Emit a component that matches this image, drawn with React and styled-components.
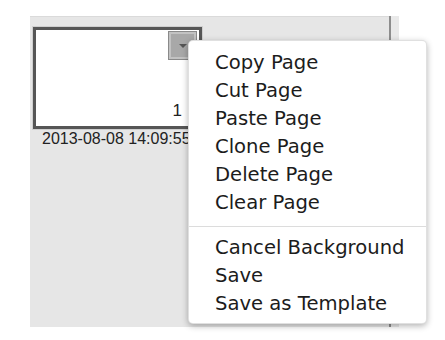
import React from "react";
import styled, { createGlobalStyle } from "styled-components";

const GlobalStyle = createGlobalStyle`
  body {
    margin: 0;
    background: #ffffff;
  }
`;

const Stage = styled.div`
  position: relative;
  width: 445px;
  height: 340px;
  padding: 16px 0 0 30px;
  box-sizing: border-box;
  overflow: hidden;
`;

const Panel = styled.div`
  display: flex;
  width: 369px;
  height: 311px;
  background: #e6e6e6;
`;

const ThumbList = styled.div`
  flex: 1;
  display: flex;
  flex-direction: column;
  padding: 9px 0 0 2px;
  border-top: 1px solid #dadada;
`;

const Divider = styled.div`
  width: 2px;
  background: #8d8d8d;
`;

const Strip = styled.div`
  width: 8px;
  background: #e9e9e9;
`;

const Thumb = styled.div`
  position: relative;
  width: 171px;
  height: 104px;
  box-sizing: border-box;
  border: 1px solid #cfcfcf;
`;

const ThumbInner = styled.div`
  height: 100%;
  box-sizing: border-box;
  border: 3px solid #565656;
  background: #ffffff;
  display: flex;
  flex-direction: column;
  align-items: flex-end;
  justify-content: flex-end;
  padding: 0 17px 6px 0;
`;

const PageNum = styled.span`
  font-family: "Liberation Sans", Arial, sans-serif;
  font-size: 17px;
  line-height: 18px;
  color: #222222;
`;

const DropButton = styled.div`
  position: absolute;
  top: 4px;
  right: 5px;
  width: 29px;
  height: 29px;
  box-sizing: border-box;
  border: 1px solid #8a8a8a;
  background: #a8a8a8;
  box-shadow: inset 0 0 0 2px #c2c2c2;
  display: flex;
  justify-content: center;
  padding-top: 12px;
`;

const Caret = styled.div`
  width: 0;
  height: 0;
  border-left: 4px solid transparent;
  border-right: 4px solid transparent;
  border-top: 4px solid #555555;
`;

const DateLabel = styled.div`
  font-family: "Liberation Sans", Arial, sans-serif;
  font-size: 16px;
  line-height: 18px;
  color: #222222;
  padding-left: 10px;
  white-space: nowrap;
`;

const Menu = styled.ul`
  position: absolute;
  left: 188px;
  top: 40px;
  width: 239px;
  height: 284px;
  box-sizing: border-box;
  margin: 0;
  padding: 8px 0 7px;
  list-style: none;
  background: #ffffff;
  border-radius: 5px;
  border: 1px solid rgba(0, 0, 0, 0.12);
  box-shadow: 0 2px 6px rgba(0, 0, 0, 0.3);
  z-index: 2;
`;

const Item = styled.li`
  font-family: "DejaVu Sans", "Lucida Grande", sans-serif;
  font-size: 19.6px;
  line-height: 28px;
  color: #1c1c1c;
  padding-left: 26px;
  white-space: nowrap;
`;

const Separator = styled.li`
  height: 1px;
  margin: 9px 0 7px;
  background: #dcdcdc;
`;

const firstGroup = [
  "Copy Page",
  "Cut Page",
  "Paste Page",
  "Clone Page",
  "Delete Page",
  "Clear Page",
];
const secondGroup = ["Cancel Background", "Save", "Save as Template"];

export default function App() {
  return (
    <>
      <GlobalStyle />
      <Stage>
        <Panel>
          <ThumbList>
            <Thumb>
              <ThumbInner>
                <PageNum>1</PageNum>
              </ThumbInner>
              <DropButton>
                <Caret />
              </DropButton>
            </Thumb>
            <DateLabel>2013-08-08 14:09:55</DateLabel>
          </ThumbList>
          <Divider />
          <Strip />
        </Panel>
        <Menu>
          {firstGroup.map((label) => (
            <Item key={label}>{label}</Item>
          ))}
          <Separator />
          {secondGroup.map((label) => (
            <Item key={label}>{label}</Item>
          ))}
        </Menu>
      </Stage>
    </>
  );
}
